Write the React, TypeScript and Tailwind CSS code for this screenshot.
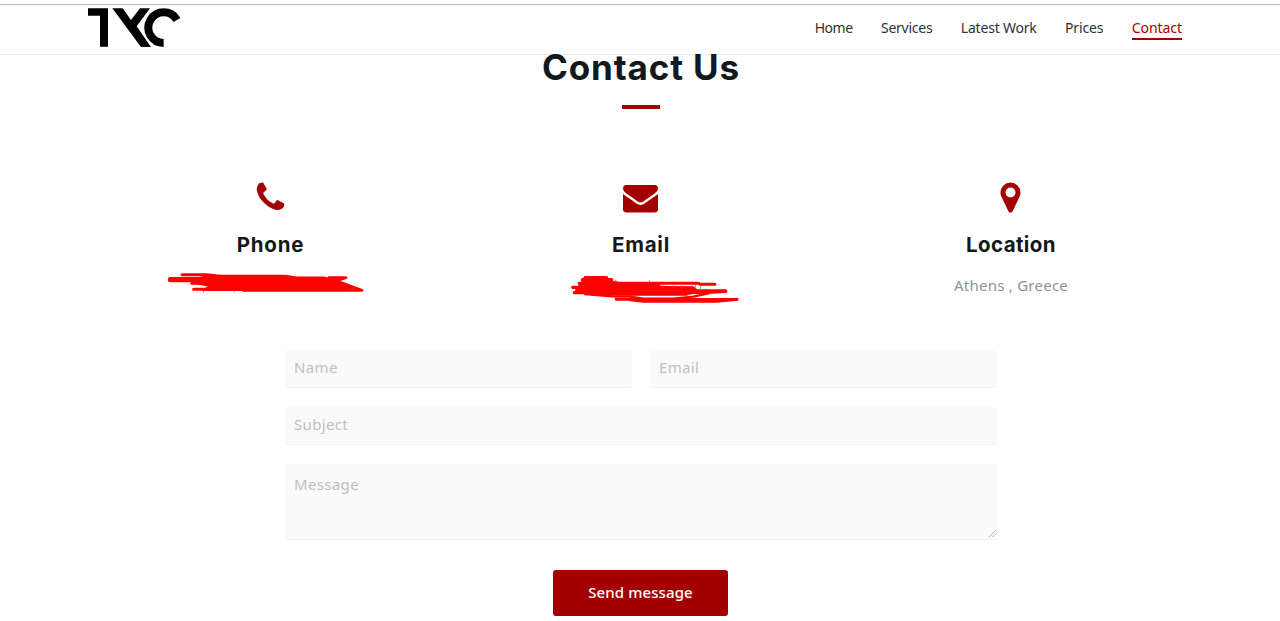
import type { ReactNode } from 'react'

const NAV_LINKS = [
  { label: 'Home', style: 'tracking-[-0.5px]' },
  { label: 'Services', style: 'tracking-[-0.25px]' },
  { label: 'Latest Work', style: 'tracking-[-0.2px]' },
  { label: 'Prices', style: 'tracking-[-0.15px]' },
  { label: 'Contact', style: 'tracking-[-0.05px]' },
]
const ACTIVE = 'Contact'

const ICONS = {
  phone:
    'M1600 1240q0 27-10 70.5t-21 68.5q-21 50-122 106-94 51-186 51-27 0-53-3.5t-57.5-12.5-47-14.5-55.5-20.5-49-18q-98-35-175-83-127-79-264-216t-216-264q-48-77-83-175-3-9-18-49t-20.5-55.5-14.5-47-12.5-57.5-3.5-53q0-92 51-186 56-101 106-122 25-11 68.5-21t70.5-10q14 0 21 3 18 6 53 76 11 19 30 54t35 63.5 31 53.5q3 4 17.5 25t21.5 35.5 7 28.5q0 20-28.5 50t-62 55-62 53-28.5 46q0 9 5 22.5t8.5 20.5 14 24 11.5 19q76 137 174 235t235 174q2 1 19 11.5t24 14 20.5 8.5 22.5 5q18 0 46-28.5t53-62 55-62 50-28.5q14 0 28.5 7t35.5 21.5 25 17.5q25 15 53.5 31t63.5 35 54 30q70 35 76 53 3 7 3 21z',
  envelope:
    'M1792 710v794q0 66-47 113t-113 47h-1472q-66 0-113-47t-47-113v-794q44 49 101 87 362 246 497 345 57 42 92.5 65.5t94.5 48 110 24.5h2q51 0 110-24.5t94.5-48 92.5-65.5q170-123 498-345 57-39 100-87zm0-294q0 79-49 151t-122 123q-376 261-468 325-10 7-42.5 31t-54 38.5-52 32.5-57.5 27-50 9h-2q-23 0-50-9t-57.5-27-52-32.5-54-38.5-42.5-31q-91-64-262-182.5t-205-142.5q-62-42-117-115.5t-55-136.5q0-78 41.5-130t118.5-52h1472q65 0 112.5 47t47.5 113z',
  marker:
    'M1152 640q0-106-75-181t-181-75-181 75-75 181 75 181 181 75 181-75 75-181zm256 0q0 109-33 179l-364 774q-16 33-47.5 52t-67.5 19-67.5-19-46.5-52l-365-774q-33-70-33-179 0-212 150-362t362-150 362 150 150 362z',
}

function Logo() {
  return (
    <svg viewBox="54 25 276 118" className="mt-[3px] ml-[3px] h-[39.33px] w-[92px]">
      <path d="M54 26h60v115H90V48H54z" />
      <path d="M127 26h31l25 35 27-35h30l-40 54 43 62h-30z" />
      <path d="M321 61A46 46 0 1 0 281 130" fill="none" stroke="#000" strokeWidth="24" />
    </svg>
  )
}

function Header() {
  return (
    <header className="h-[55px] border-b border-[#ececec] pt-1">
      <div className="h-px bg-[#bdbdbd]" />
      <div className="mx-auto flex w-[1110px] justify-between">
        <Logo />
        <nav className="mr-[13px] flex gap-[28.4px] pt-[12px] font-['Noto_Sans'] text-[14px] leading-[21px] text-[#2b3238]">
          {NAV_LINKS.map(({ label, style }) => (
            <a
              key={label}
              className={`h-[23px] border-b-2 ${style} ${
                label === ACTIVE ? 'border-[#a30000] text-[#a30000]' : 'border-transparent'
              }`}
            >
              {label}
            </a>
          ))}
        </nav>
      </div>
    </header>
  )
}

interface InfoProps {
  icon: keyof typeof ICONS
  title: string
  titleStyle: string
  children: ReactNode
}

function Info({ icon, title, titleStyle, children }: InfoProps) {
  return (
    <div className="flex flex-col items-center">
      <svg viewBox="0 0 1792 1792" className="size-[35px] fill-[#a30000]">
        <path d={ICONS[icon]} />
      </svg>
      <h3 className={`mt-[16px] font-['Inter'] text-[20.5px] leading-[28px] font-bold text-[#12181b] ${titleStyle}`}>
        {title}
      </h3>
      <div className="mt-[9px] flex h-[40px] w-full justify-center">{children}</div>
    </div>
  )
}

/** Marker strokes that hide the phone number */
function PhoneScribble() {
  return (
    <svg viewBox="0 0 370 40" className="h-[40px] w-[370px]">
      <g transform="translate(75 -6) scale(.3333)" fill="none" stroke="#f00" strokeLinecap="round" strokeLinejoin="round">
        <path d="M130 84v7M222 84v7" stroke="#667" strokeWidth="2" />
        <path d="M66 38H140L180 43H375L410 48H490L545 63L575 74L606 85H250" strokeWidth="9" />
        <path d="M31 53H120" strokeWidth="15" />
        <path d="M31 50H150" strokeWidth="10" />
        <path d="M95 64H180M101 82H240" strokeWidth="9" />
        <path d="M506 47H558L515 60" strokeWidth="9" />
        <path d="M140 42H375L410 49H490L540 66L575 76L560 84H130L150 72L110 64L120 48Z" fill="#f00" strokeWidth="6" />
      </g>
    </svg>
  )
}

/** Same for the email address, a few letter tops stay visible */
function EmailScribble() {
  return (
    <svg viewBox="0 0 370 40" className="h-[40px] w-[370px]">
      <g transform="translate(105 -2) scale(.3333)" fill="none" stroke="#f00" strokeLinecap="round" strokeLinejoin="round">
        <path d="M76 36H139M68 42H154" strokeWidth="12" />
        <path d="M57 52H415L420 55H465" strokeWidth="9" />
        <path d="M38 64H300L400 67L410 75H497" strokeWidth="10" />
        <path d="M43 80H380L440 79L497 76" strokeWidth="10" />
        <path d="M70 46H150L180 52L298 54V64H400L408 76L380 86H100L48 72Z" fill="#f00" strokeWidth="6" />
        <path d="M75 84L165 92H210L250 98H340L400 92L445 82" strokeWidth="7" />
        <path d="M168 100H532M210 102L250 106H470L532 100" strokeWidth="8" />
        <path d="M165 43l7 4M268 43v5M310 60v4M338 60v4M365 60v4M393 60v4M407 58v10M422 58v10" stroke="#667" strokeWidth="2" />
      </g>
    </svg>
  )
}

const FIELD =
  "block w-full resize-none rounded-[1px] border-b border-[#f3f3f3] bg-[#fafafa] px-[9px] font-['Noto_Sans'] text-[15px] tracking-[0.35px] placeholder-[#bfbfbf] outline-none"

export default function App() {
  return (
    <div className="h-[621px] overflow-hidden bg-white">
      <Header />
      <main className="mx-auto w-[1110px]">
        <h2 className="-mt-[8px] pl-[2px] text-center font-['Inter'] text-[35px] leading-[40px] font-bold tracking-[0.85px] text-[#12181b]">
          Contact Us
        </h2>
        <div className="ml-[537px] mt-[18px] h-[4px] w-[38px] bg-[#a30000]" />

        <section className="mt-[71px] grid grid-cols-3">
          <Info icon="phone" title="Phone" titleStyle="pl-px tracking-[0.8px]">
            <PhoneScribble />
          </Info>
          <Info icon="envelope" title="Email" titleStyle="pl-[2px] tracking-[0.8px]">
            <EmailScribble />
          </Info>
          <Info icon="marker" title="Location" titleStyle="pl-[2px] tracking-[0.4px]">
            <p className="pt-[6px] pl-[2px] font-['Noto_Sans'] text-[15px] leading-[22px] tracking-[0.25px] text-[#8a929b]">
              Athens , Greece
            </p>
          </Info>
        </section>

        <form className="mt-[42px] ml-[200px] w-[712px]">
          <div className="flex w-full gap-[18px]">
            <input className={`${FIELD} h-[38px] pb-[3px]`} placeholder="Name" />
            <input className={`${FIELD} h-[38px] pb-[3px]`} placeholder="Email" />
          </div>
          <input className={`${FIELD} mt-[19px] h-[38px] pb-[3px]`} placeholder="Subject" />
          <div className="relative mt-[19px] w-full">
            <textarea className={`${FIELD} h-[76px] pt-[9px]`} placeholder="Message" />
            <svg viewBox="0 0 10 10" className="absolute right-0 bottom-[2px] size-[9px]">
              <path d="M1 9L9 1M5 9L9 5" stroke="#aaa" />
            </svg>
          </div>
          <button
            type="button"
            className="mt-[30px] ml-[268px] block h-[46px] w-[175px] rounded-[3px] bg-[#a30000] pb-[2px] font-['Noto_Sans'] text-[15px] font-medium tracking-[0.1px] text-white"
          >
            Send message
          </button>
        </form>
      </main>
    </div>
  )
}
